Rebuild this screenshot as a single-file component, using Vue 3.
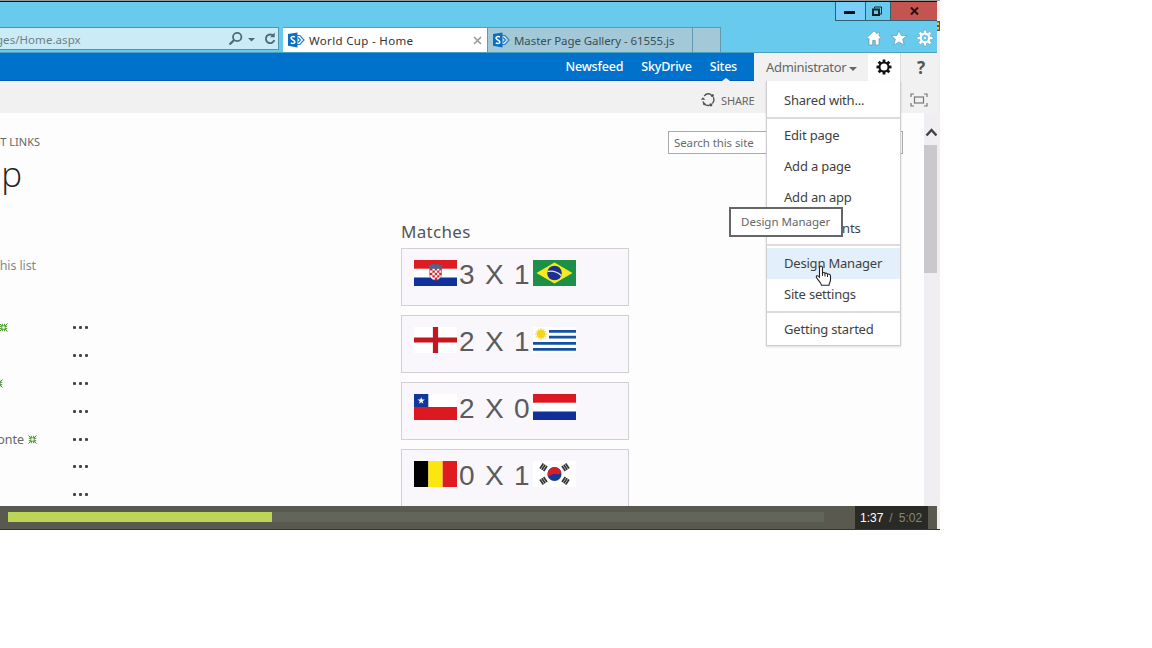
<script setup>
const nav = ['Newsfeed', 'SkyDrive', 'Sites']
const groups = [
  ['Shared with...'],
  ['Edit page', 'Add a page', 'Add an app', 'Site contents'],
  ['Design Manager', 'Site settings'],
  ['Getting started'],
]
const matches = [
  { home: 'hr', score: '3 X 1', away: 'br' },
  { home: 'en', score: '2 X 1', away: 'uy' },
  { home: 'cl', score: '2 X 0', away: 'nl' },
  { home: 'be', score: '0 X 1', away: 'kr' },
]
const rows = [
  { name: '', isNew: true, end: 8 },
  { name: '', isNew: false, end: 0 },
  { name: '', isNew: true, end: 3 },
  { name: '', isNew: false, end: 0 },
  { name: 'onte', isNew: true, end: 37 },
  { name: '', isNew: false, end: 0 },
  { name: '', isNew: false, end: 0 },
]
const progress = (264 / 816) * 100
</script>

<template>
  <div class="player">
    <div class="window">
      <header class="chrome">
        <div class="caption">
          <button class="cap min"><i></i></button>
          <button class="cap max">
            <svg width="12" height="11" viewBox="0 0 12 11" fill="none" stroke="#10242e">
              <path d="M3.5 2.5V1h7v7H9" stroke-width="1" />
              <rect x="2" y="3.5" width="6" height="5.5" stroke-width="2" />
            </svg>
          </button>
          <button class="cap close">
            <svg width="9" height="8" viewBox="0 0 9 8"><path d="M1 .5l7 7M8 .5l-7 7" stroke="#2a1010" stroke-width="2" /></svg>
          </button>
        </div>
        <div class="tools">
          <div class="address">
            <span class="url">ges/Home.aspx</span>
            <svg width="50" height="16" viewBox="0 0 50 16" fill="none" stroke="#4b6b79">
              <circle cx="10.2" cy="6" r="4.2" stroke-width="1.8" />
              <path d="M7.2 9L2.5 13.5" stroke-width="2.2" />
              <path d="M21 7h7l-3.500 3.500z" fill="#4b6b79" stroke="none" />
              <path d="M46.600 5.200A4.300 4.300 0 1 0 47.300 9" stroke-width="1.900" />
              <path d="M47.700 1.500v4.700h-4.500z" fill="#4b6b79" stroke="none" />
            </svg>
          </div>
          <div class="tab active">
            <svg class="sp" width="17" height="16" viewBox="0 0 17 16">
              <path d="M9 3.500l3 0 4 4.500-4 4.500H9" fill="none" stroke="#2a80c5" stroke-width="1.200" />
              <path d="M10 5.500l2.500 2.500L10 10.500" fill="none" stroke="#2a80c5" stroke-width="1.300" />
              <path d="M0 2l9.500-1.600v15L0 13.800z" fill="#0a6fc2" />
              <path d="M6.900 5C5.500 4.200 3 4.400 3 6.100c0 2 3.900 1.700 3.900 3.800 0 1.700-2.700 1.900-4.100 1" fill="none" stroke="#fff" stroke-width="1.500" />
            </svg>
            <span class="t1">World Cup - Home</span>
            <svg class="x" width="9" height="9" viewBox="0 0 9 9"><path d="M1 1l7 7M8 1L1 8" stroke="#999" stroke-width="1.600" /></svg>
          </div>
          <div class="tab">
            <svg class="sp" width="17" height="16" viewBox="0 0 17 16">
              <path d="M9 3.500l3 0 4 4.500-4 4.500H9" fill="#d5e8f1" stroke="#2a80c5" stroke-width="1.200" />
              <path d="M10 5.500l2.500 2.500L10 10.500" fill="none" stroke="#2a80c5" stroke-width="1.300" />
              <path d="M0 2l9.500-1.600v15L0 13.800z" fill="#0a6fc2" />
              <path d="M6.900 5C5.500 4.200 3 4.400 3 6.100c0 2 3.900 1.700 3.900 3.800 0 1.700-2.700 1.900-4.100 1" fill="none" stroke="#fff" stroke-width="1.500" />
            </svg>
            <span class="t2">Master Page Gallery - 61555.js</span>
          </div>
          <div class="newtab"></div>
          <div class="shortcuts">
            <svg width="16" height="16" viewBox="0 0 16 16"><path d="M8 .8L.7 8l1.300 1.200L3 8.300V15h3.700v-4.500h2.600V15H13V8.300l1 .9L15.300 8l-2.200-2.200V2.200h-2v1.600z" fill="#fff" stroke="#5e97ae" stroke-width=".7" /></svg>
            <svg width="18" height="16" viewBox="0 0 18 16"><path d="M9 .6l2.200 5h5.800l-4.400 3.700 1.700 5.900L9 11.900l-5.300 3.300 1.700-5.900L1 5.600h5.800z" fill="#fff" stroke="#5e97ae" stroke-width=".7" /></svg>
            <svg width="18" height="18" viewBox="-9 -9 18 18">
              <g fill="#fff" stroke="#5e97ae" stroke-width=".5"><rect v-for="a in 8" :key="a" x="-1.500" y="-7.900" width="3" height="4" :transform="`rotate(${a * 45})`" /></g>
              <circle r="4.300" fill="#68caec" stroke="#fff" stroke-width="2.300" />
              <circle r="1.200" fill="#e8f6fb" />
            </svg>
          </div>
        </div>
      </header>

      <nav class="suite">
        <div class="links"><a v-for="(n, i) in nav" :key="n" :class="['n' + i]">{{ n }}</a></div>
        <div class="user"><span>Administrator</span><i></i></div>
        <div class="gear">
          <svg width="18" height="18" viewBox="-9 -9 18 18">
            <rect v-for="a in 8" :key="a" x="-1.400" y="-7.500" width="2.800" height="3.500" :transform="`rotate(${a * 45})`" fill="#111" />
            <circle r="4.500" fill="#fff" stroke="#111" stroke-width="2" />
          </svg>
        </div>
        <div class="help">?</div>
      </nav>

      <div class="ribbon">
        <svg class="shareico" width="16" height="16" viewBox="0 0 16 16" fill="none" stroke="#555" stroke-width="1.400">
          <path d="M4.200 4A5.500 5.500 0 0 1 11 2.600M13.300 5.300a5.500 5.500 0 0 1-1 6.200M9.400 13.400A5.500 5.500 0 0 1 3 9.500" />
          <path d="M.8 7.800L3 5.300l2.400 2.500z" fill="#555" stroke="none" />
          <circle cx="12.300" cy="3.500" r="1.600" fill="#555" stroke="none" /><circle cx="10.800" cy="12.800" r="1.600" fill="#555" stroke="none" /><circle cx="4.300" cy="12" r="1.200" fill="#555" stroke="none" />
        </svg>
        <span class="share">SHARE</span>
        <svg class="focus" width="18" height="14" viewBox="0 0 18 14" fill="none" stroke="#777" stroke-width="1.200">
          <path d="M4 1H1v3M14 1h3v3M1 10v3h3M17 10v3h-3" /><rect x="4.500" y="4" width="9" height="6" />
        </svg>
      </div>

      <main class="page">
        <aside class="left">
          <div class="crumb"><span>T LINKS</span></div>
          <h1><span>p</span></h1>
          <div class="hint"><span>his list</span></div>
          <div class="list">
            <div v-for="(r, i) in rows" :key="i" class="row">
              <div class="name" :style="{ width: r.end + 'px' }">
                <span v-if="r.name">{{ r.name }}</span>
                <svg v-if="r.isNew" width="9" height="9" viewBox="0 0 9 9" fill="none" stroke="#3d9419" stroke-width="1">
                  <path d="M.5.5l2.300 2.300M8.500.5L6.200 2.800M.5 8.500l2.300-2.300M8.500 8.500L6.200 6.200M3.300.8v2M5.700.8v2M3.300 6.200v2M5.700 6.200v2M.8 3.300h2M.8 5.700h2M6.200 3.300h2M6.200 5.700h2" />
                  <path d="M2.800 2.800h3.400v3.400H2.800z" stroke-width=".8" />
                </svg>
              </div>
              <div class="dots"><i></i><i></i><i></i></div>
            </div>
          </div>
        </aside>
        <section class="matches">
          <h2>Matches</h2>
          <div v-for="m in matches" :key="m.home" class="card">
            <svg v-if="m.home === 'hr'" width="43" height="26" viewBox="0 0 43 26">
              <rect width="43" height="26" fill="#fff" /><rect width="43" height="8.700" fill="#dc1c20" /><rect y="17.500" width="43" height="8.500" fill="#10309a" />
              <path d="M15.500 8h12v6c0 8-12 8-12 0z" fill="#fff" stroke="#d33" stroke-width=".6" />
              <path d="M16 8h2.400v2.400H16zM20.800 8h2.400v2.400h-2.400zM25.200 8h2.300v2.400h-2.300zM18.400 10.400h2.400v2.400h-2.400zM23.200 10.400h2.200v2.400h-2.200zM16 12.800h2.400v2.400H16zM20.800 12.800h2.400v2.400h-2.400zM25.200 12.800h2.300v2.400h-2.300zM18.400 15.200h2.400v2.400h-2.400zM23.200 15.200h2.200v2.400h-2.200zM20.800 17.600h2.400V20h-2.400z" fill="#d8262b" />
              <path d="M14.500 4.500l2.500 1 2-1.700 2.500 1 2.500-1 2 1.700 2.500-1-1 4.200h-12z" fill="#496896" />
            </svg>
            <svg v-else-if="m.home === 'en'" width="43" height="26" viewBox="0 0 43 26"><rect width="43" height="26" fill="#fff" /><path d="M21.500 0v26M0 13h43" stroke="#c4161f" stroke-width="5.200" /></svg>
            <svg v-else-if="m.home === 'cl'" width="43" height="26" viewBox="0 0 43 26"><rect width="43" height="26" fill="#fff" /><rect y="13" width="43" height="13" fill="#dc1820" /><rect width="14.300" height="13" fill="#12379a" /><path d="M7.200 3l.9 2.600h2.700L8.600 7.200l.8 2.600-2.200-1.600L5 9.800l.8-2.600-2.200-1.600h2.700z" fill="#fff" /></svg>
            <svg v-else width="43" height="26" viewBox="0 0 43 26"><rect width="14.400" height="26" fill="#000" /><rect x="14.300" width="14.400" height="26" fill="#fde510" /><rect x="28.700" width="14.300" height="26" fill="#e01b22" /></svg>

            <span class="score">{{ m.score }}</span>

            <svg v-if="m.away === 'br'" width="43" height="26" viewBox="0 0 43 26">
              <rect width="43" height="26" fill="#1c9048" /><path d="M21.500 2.500L39.500 13l-18 10.500L3.500 13z" fill="#f8ea1c" /><circle cx="21.500" cy="13" r="7.300" fill="#1c318c" /><path d="M14.500 11.500c5-1 10 .5 13.800 4" fill="none" stroke="#dfe8ee" stroke-width="1.400" />
            </svg>
            <svg v-else-if="m.away === 'uy'" width="43" height="26" viewBox="0 0 43 26">
              <rect width="43" height="26" fill="#fff" /><path d="M16 4.400h27M16 10.200h27M0 16.300h43M0 22.400h43" stroke="#1550a4" stroke-width="2.800" />
              <g stroke="#f5e47a" stroke-width="1.500"><path v-for="a in 6" :key="a" d="M2 7h12" :transform="`rotate(${a * 30} 8 7)`" /></g><circle cx="8" cy="7" r="4.200" fill="#f4d51c" />
            </svg>
            <svg v-else-if="m.away === 'nl'" width="43" height="26" viewBox="0 0 43 26"><rect width="43" height="26" fill="#fff" /><rect width="43" height="8.700" fill="#dc1820" /><rect y="17.500" width="43" height="8.500" fill="#12309a" /></svg>
            <svg v-else width="43" height="26" viewBox="0 0 43 26">
              <rect width="43" height="26" fill="#fff" />
              <circle cx="21.500" cy="13" r="7" fill="#12389a" /><path d="M14.700 15a7 7 0 1 1 13.600-3.500c-1 2.500-4.500 1.500-7 1.500s-4 3-6.600 2z" fill="#dc1c24" />
              <g stroke="#333" stroke-width="1.700"><path v-for="(p, k) in [[10.500, 6.300, -56], [32.500, 6.300, 56], [10.500, 19.700, 56], [32.500, 19.700, -56]]" :key="k" d="M-3-2.200h6M-3 0h6M-3 2.200h6" :transform="`translate(${p[0]} ${p[1]}) rotate(${p[2]})`" /></g>
            </svg>
          </div>
        </section>
        <div class="search"><span>Search this site</span></div>
        <div class="scroll">
          <svg width="13" height="32" viewBox="0 0 13 32"><path d="M2.500 22.500L7.500 17l5 5.500" fill="none" stroke="#444" stroke-width="2.500" /></svg>
          <div class="thumb"></div>
        </div>
      </main>

      <div class="menu">
        <div v-for="(g, i) in groups" :key="i" :class="['group', 'g' + i]">
          <div v-for="item in g" :key="item" :class="['item', { hot: item === 'Design Manager' }]"><span>{{ item }}</span></div>
        </div>
      </div>
      <div class="tooltip"><span>Design Manager</span></div>
      <svg class="cursor" width="18" height="22" viewBox="0 0 18 22">
        <path d="M5 1.500c1.500-.8 2.500 0 2.500 1.500v5c1-.9 2.300-.5 2.500.5 1-.7 2.200-.2 2.500.7 1.200-.6 3 0 3 1.800v4c0 2-1.500 3-1.500 5.300H6.500c0-2-3.500-5-5-7.800-.8-1.600 1-2.800 3-.4V2.500z" fill="#fff" stroke="#222" stroke-width="1.100" />
        <path d="M7.500 8v3M10 9v2.500M12.500 9.500V12" stroke="#222" />
      </svg>
    </div>
    <div class="edge">
      <svg width="3" height="10" viewBox="0 0 3 10"><rect width="3" height="10" fill="#555b3c" /><path d="M0 1.500h2v2.500H0zM0 6h2v2.500H0z" fill="#e4c955" /></svg>
    </div>
    <div class="controls">
      <div class="track"><div class="fill" :style="{ width: progress + '%' }"></div></div>
      <div class="time"><b>1:37</b><span>/</span><span>5:02</span></div>
    </div>
  </div>
</template>

<style>
body { background: #fff; }
</style>

<style scoped>
* { box-sizing: border-box; }
.player { position: relative; width: 940px; height: 530px; overflow: hidden; display: flex; background: #fdfdfd; font-family: "Noto Sans", sans-serif; font-size: 13px; color: #444; }
.player span, .player a { white-space: nowrap; }
svg { display: block; flex: none; }
.window { width: 937px; flex: none; display: flex; flex-direction: column; }
.edge { width: 3px; background: #f0efeb; border-top: 1px solid #999; padding-top: 20px; }
.chrome { height: 53px; flex: none; background: #68caec; border-top: 1px solid #999; box-shadow: inset 0 1px #111; display: flex; flex-direction: column; }
.caption { height: 26px; padding-top: 1px; display: flex; justify-content: flex-end; align-items: flex-start; }
.cap { height: 19px; margin: 0; padding: 0; border: 1px solid #315e70; border-top: 0; background: #68caec; display: flex; align-items: center; justify-content: center; }
.cap.min { width: 30px; background: #7acffa; border-right: 0; padding-right: 2px; }
.cap.min i { width: 11px; height: 3px; background: #111; margin-top: 3px; }
.cap.max { width: 26px; padding-right: 2px; }
.cap.close { width: 46px; background: #c4544f; border-left: 0; border-right: 0; }
.tools { height: 26px; display: flex; align-items: stretch; border-bottom: 1px solid #4c9fc0; }
.address { width: 279px; height: 23px; margin-right: 4px; border: 1px solid #5195ad; border-left: 0; background: #cbebf7; display: flex; align-items: center; justify-content: space-between; padding-right: 1px; font-size: 11.500px; color: #6f7e85; }
.url { margin-left: -4px; letter-spacing: .05px; padding-top: 1px; }
.tab { width: 205px; background: #a3c9d8; border: 1px solid #5f9ab0; border-bottom: 0; border-left: 0; display: flex; align-items: center; padding-left: 5px; color: #3c4d55; font-size: 11.500px; }
.tab.active { background: #fff; color: #333; }
.t1 { letter-spacing: .33px; }
.t2 { letter-spacing: -.08px; }
.sp { margin-right: 4px; }
.x { margin-left: auto; margin-right: 5px; }
.newtab { width: 28px; background: #a3c9d8; border: 1px solid #5f9ab0; border-left: 0; border-bottom: 0; }
.shortcuts { margin-left: auto; display: flex; gap: 8px; align-items: center; padding-right: 3px; padding-bottom: 4px; }
.suite { height: 28px; flex: none; display: flex; background: #f1f1f1; }
.links { width: 754px; background: #0072cc; border-bottom: 1px solid #0058b4; color: #fff; display: flex; justify-content: flex-end; gap: 18px; padding-right: 17px; line-height: 28px; font-weight: 500; font-size: 12.500px; letter-spacing: -.2px; }
.links a { position: relative; }
.n2::after { content: ""; position: absolute; left: 50%; bottom: -1px; margin-left: -1px; border: 4px solid transparent; border-top: 0; border-bottom: 3px solid #f1f1f1; }
.user { width: 114px; display: flex; align-items: center; padding-left: 12px; color: #666; letter-spacing: -.32px; }
.user i { margin-left: 3px; margin-top: 3px; border: 4px solid transparent; border-top-color: #666; border-bottom: 0; }
.gear { width: 33px; background: #fff; border-right: 1px solid #ddd; display: flex; align-items: center; padding-left: 7px; }
.help { width: 36px; padding-left: 4px; text-align: center; font-weight: 700; font-size: 17px; line-height: 29px; color: #555; }
.ribbon { height: 32px; flex: none; background: #f1f1f1; display: flex; align-items: center; padding: 6px 9px 0 700px; }
.share { font-size: 11px; letter-spacing: -.15px; color: #666; margin-left: 5px; }
.focus { margin-left: auto; }
.page { position: relative; height: 417px; flex: none; display: flex; background: #fdfdfd; }
.left { width: 401px; color: #666; }
.crumb { height: 58px; display: flex; line-height: 58px; width: 40px; justify-content: flex-end; font-size: 11px; }
h1 { margin: 0; width: 22px; display: flex; justify-content: flex-end; font: 300 35px/40px "Open Sans", sans-serif; height: 40px; margin-top: -17px; color: #222; }
.hint { margin-top: 62px; width: 36px; height: 20px; line-height: 20px; display: flex; justify-content: flex-end; font-size: 12.500px; color: #888; letter-spacing: -.1px; }
.list { margin-top: 38px; }
.row { height: 27.800px; display: flex; align-items: center; }
.name { display: flex; justify-content: flex-end; align-items: center; gap: 4px; height: 20px; font-size: 12.500px; }
.dots { display: flex; gap: 3px; margin-left: auto; margin-right: 313px; }
.dots i { width: 3px; height: 3px; background: #444; border-radius: 1px; }
.matches { width: 228px; }
h2 { margin: 0; padding-top: 106px; height: 135px; font-size: 17px; letter-spacing: .3px; font-weight: 400; line-height: 26px; color: #555; }
.card { height: 58px; margin-bottom: 9px; border: 1px solid #d2d0d4; background: #f9f7fb; padding: 11px 0 0 12px; display: flex; align-items: flex-start; }
.score { width: 76px; padding-left: 2px; font: 28px/30px "Liberation Sans", Arial, sans-serif; letter-spacing: 1.300px; color: #5b5b5e; }
.search { width: 235px; height: 23px; margin: 18px 0 0 39px; border: 1px solid #aaa; padding-left: 5px; font-size: 11.500px; letter-spacing: -.1px; line-height: 22px; color: #6b6b6b; background: #fff; }
.scroll { margin-left: auto; width: 13px; background: #f0eef2; }
.thumb { height: 128px; background: #cac8cc; }
.menu { position: absolute; left: 766px; top: 81px; width: 135px; height: 265px; background: #fff; border: 1px solid #cfcdd0; border-top: 0; box-shadow: 0 1px 2px #0002; color: #3f3f3f; letter-spacing: -.2px; }
.item { height: 31px; line-height: 31px; padding-left: 17px; }
.group + .group { border-top: 2px solid #dddbde; }
.g0 { height: 36px; padding-top: 4px; }
.g1 { height: 127px; padding-top: 1px; }
.g2 { height: 67px; padding-top: 2px; }
.g3 { padding-top: 1px; }
.hot { background: #e3effb; }
.tooltip { position: absolute; left: 729px; top: 207px; width: 114px; height: 30px; border: 2px solid #666; background: #fff; padding-left: 10px; line-height: 26px; font-size: 11.500px; color: #666; }
.cursor { position: absolute; left: 815px; top: 265px; }
.controls { position: absolute; left: 0; top: 506px; width: 940px; height: 24px; border-bottom: 1px solid #333; background: linear-gradient(90deg, #59594f 937px, #f0efeb 937px); display: flex; align-items: flex-start; }
.track { margin: 6px 31px 0 8px; width: 816px; height: 10px; background: #62655a; }
.fill { height: 10px; background: #bcd556; }
.time { width: 73px; height: 23px; background: #292a25; display: flex; align-items: center; padding-left: 5px; font: 12px "Liberation Sans", Arial, sans-serif; color: #858575; gap: 6px; }
.time b { font-weight: 400; color: #fff; }
</style>
